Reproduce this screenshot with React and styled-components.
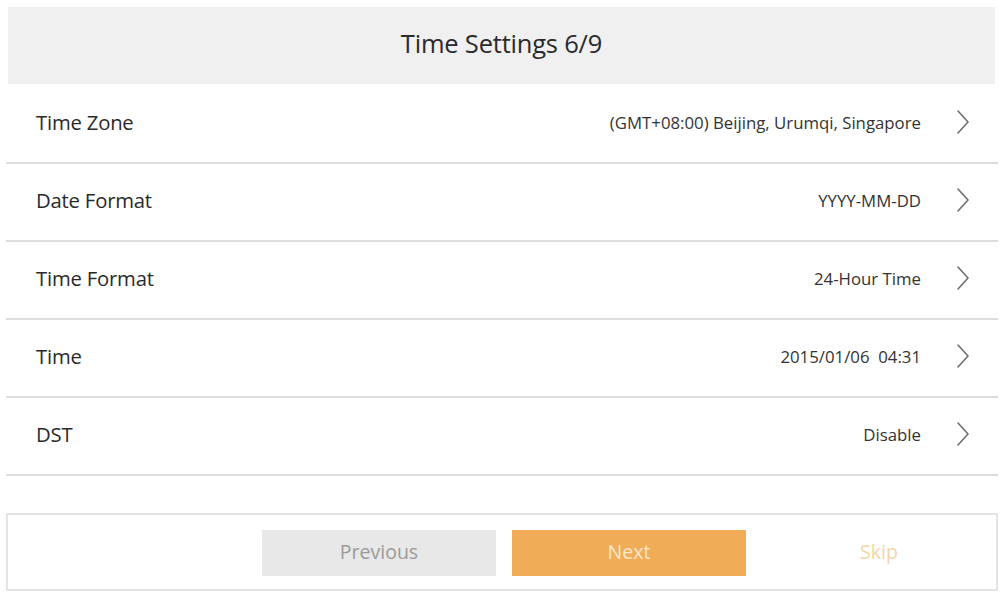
import React from "react";
import styled, { createGlobalStyle } from "styled-components";

const Global = createGlobalStyle`
  html, body { margin: 0; padding: 0; background: #ffffff; }
  body { font-family: "Open Sans", "Noto Sans", "Liberation Sans", sans-serif; }
  * { box-sizing: border-box; }
`;

const Page = styled.div`
  width: 1001px;
  height: 593px;
  padding: 7px 3px 0 6px;
  display: flex;
  flex-direction: column;
  background: #fff;
`;

const Header = styled.div`
  height: 77px;
  margin: 0 3px 0 2px;
  background: #f0f0f0;
  display: flex;
  align-items: center;
  justify-content: center;
  font-size: 25.5px;
  color: #2b2b2b;
  letter-spacing: -0.2px;
  padding-bottom: 6px;
`;

const List = styled.div`
  margin-top: 2px;
  display: flex;
  flex-direction: column;
`;

const Row = styled.div`
  height: 78px;
  padding: 0 28px 4px 30px;
  border-bottom: 2px solid #dedede;
  display: flex;
  align-items: center;
`;

const Label = styled.span`
  font-size: 20.3px;
  color: #2a2a2a;
  flex: 1;
  letter-spacing: -0.2px;
`;

const Value = styled.span`
  font-size: 16.8px;
  color: #333;
  white-space: pre;
  margin-right: 35px;
`;

const Chevron = styled.svg`
  width: 14px;
  height: 26px;
  flex: none;
`;

const Footer = styled.div`
  margin-top: 37px;
  height: 78px;
  border: 2px solid #e4e4e4;
  display: flex;
  align-items: center;
  justify-content: flex-end;
  gap: 16px;
  padding-top: 1px;
`;

const FooterButton = styled.div`
  width: 234px;
  height: 46px;
  display: flex;
  align-items: center;
  justify-content: center;
  font-size: 19.5px;
  padding-bottom: 2px;
  background: ${(p) => p.$bg};
  color: ${(p) => p.$fg};
`;

const ChevronIcon = () => (
  <Chevron viewBox="0 0 14 26">
    <path d="M2 2 L12 13 L2 24" fill="none" stroke="#6e6e6e" strokeWidth="1.6" strokeLinecap="round" strokeLinejoin="round" />
  </Chevron>
);

const rows = [
  ["Time Zone", "(GMT+08:00) Beijing, Urumqi, Singapore"],
  ["Date Format", "YYYY-MM-DD"],
  ["Time Format", "24-Hour Time"],
  ["Time", "2015/01/06  04:31"],
  ["DST", "Disable"],
];

export default function App() {
  return (
    <>
      <Global />
      <Page>
        <Header>Time Settings 6/9</Header>
        <List>
          {rows.map(([label, value]) => (
            <Row key={label}>
              <Label>{label}</Label>
              <Value>{value}</Value>
              <ChevronIcon />
            </Row>
          ))}
        </List>
        <Footer>
          <FooterButton $bg="#e8e8e8" $fg="#9a9a9a">Previous</FooterButton>
          <FooterButton $bg="#f0ac57" $fg="#fde8cc">Next</FooterButton>
          <FooterButton $bg="transparent" $fg="#f3d6a6">Skip</FooterButton>
        </Footer>
      </Page>
    </>
  );
}
